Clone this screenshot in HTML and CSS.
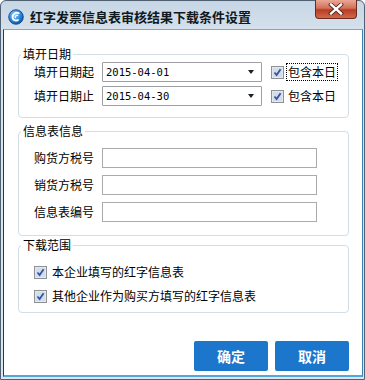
FILE: index.html
```html
<!DOCTYPE html>
<html lang="zh-CN">
<head>
    <meta charset="UTF-8">
    <title>红字发票信息表审核结果下载条件设置</title>
    <link rel="stylesheet" href="styles.css">
</head>
<body>
    <div class="window">
        <!-- 标题栏 -->
        <div class="titlebar">
            <svg class="app-icon" width="16" height="16" viewBox="0 0 16 16">
                <defs>
                    <radialGradient id="ball" cx="0.4" cy="0.35" r="0.7">
                        <stop offset="0" stop-color="#8fd0ff"/>
                        <stop offset="0.6" stop-color="#2b86d8"/>
                        <stop offset="1" stop-color="#0c4f9a"/>
                    </radialGradient>
                </defs>
                <circle cx="8" cy="8" r="7.3" fill="url(#ball)" stroke="#0b3f7a" stroke-width="0.8"/>
                <path d="M10.8 4.2 C8 2.8 4.4 5 4.6 8.4 C4.8 11 7.6 12.2 10 11" fill="none" stroke="#fff" stroke-width="1.8" stroke-linecap="round"/>
                <path d="M9.6 6.4 C8.2 6 7 7.2 7.4 8.6" fill="none" stroke="#fff" stroke-width="1.2" stroke-linecap="round"/>
            </svg>
            <span class="title">红字发票信息表审核结果下载条件设置</span>
            <div class="close-btn">
                <svg width="16" height="12" viewBox="0 0 16 12">
                    <path d="M3 1.5 L13 10.5 M13 1.5 L3 10.5" stroke="#4a2018" stroke-width="4" stroke-linecap="square"/>
                    <path d="M3 1.5 L13 10.5 M13 1.5 L3 10.5" stroke="#fff" stroke-width="2.4" stroke-linecap="square"/>
                </svg>
            </div>
        </div>

        <div class="client">
            <!-- 填开日期 -->
            <fieldset class="group group-date">
                <legend>填开日期</legend>
                <div class="row">
                    <span class="field-label">填开日期起</span>
                    <div class="combo"><span>2015-04-01</span><i class="arrow"></i></div>
                    <span class="check"><svg width="13" height="13" viewBox="0 0 13 13"><rect x="0.5" y="0.5" width="12" height="12" fill="#e3e8ee" stroke="#8f9295"/><rect x="2" y="2" width="9" height="9" fill="#d4dce6"/><path d="M3.5 6.5 L5.6 9 L9.6 3.2" fill="none" stroke="#2f55a8" stroke-width="1.8"/></svg></span>
                    <span class="check-text focus">包含本日</span>
                </div>
                <div class="row">
                    <span class="field-label">填开日期止</span>
                    <div class="combo"><span>2015-04-30</span><i class="arrow"></i></div>
                    <span class="check"><svg width="13" height="13" viewBox="0 0 13 13"><rect x="0.5" y="0.5" width="12" height="12" fill="#e3e8ee" stroke="#8f9295"/><rect x="2" y="2" width="9" height="9" fill="#d4dce6"/><path d="M3.5 6.5 L5.6 9 L9.6 3.2" fill="none" stroke="#2f55a8" stroke-width="1.8"/></svg></span>
                    <span class="check-text">包含本日</span>
                </div>
            </fieldset>

            <!-- 信息表信息 -->
            <fieldset class="group group-info">
                <legend>信息表信息</legend>
                <div class="row">
                    <span class="field-label">购货方税号</span>
                    <div class="text-box"></div>
                </div>
                <div class="row">
                    <span class="field-label">销货方税号</span>
                    <div class="text-box"></div>
                </div>
                <div class="row">
                    <span class="field-label">信息表编号</span>
                    <div class="text-box"></div>
                </div>
            </fieldset>

            <!-- 下载范围 -->
            <fieldset class="group group-range">
                <legend>下载范围</legend>
                <div class="row">
                    <span class="check"><svg width="13" height="13" viewBox="0 0 13 13"><rect x="0.5" y="0.5" width="12" height="12" fill="#e3e8ee" stroke="#8f9295"/><rect x="2" y="2" width="9" height="9" fill="#d4dce6"/><path d="M3.5 6.5 L5.6 9 L9.6 3.2" fill="none" stroke="#2f55a8" stroke-width="1.8"/></svg></span>
                    <span class="check-text">本企业填写的红字信息表</span>
                </div>
                <div class="row">
                    <span class="check"><svg width="13" height="13" viewBox="0 0 13 13"><rect x="0.5" y="0.5" width="12" height="12" fill="#e3e8ee" stroke="#8f9295"/><rect x="2" y="2" width="9" height="9" fill="#d4dce6"/><path d="M3.5 6.5 L5.6 9 L9.6 3.2" fill="none" stroke="#2f55a8" stroke-width="1.8"/></svg></span>
                    <span class="check-text">其他企业作为购买方填写的红字信息表</span>
                </div>
            </fieldset>

            <!-- 按钮 -->
            <div class="actions">
                <button class="btn">确定</button>
                <button class="btn">取消</button>
            </div>
        </div>
    </div>
</body>
</html>
```

FILE: styles.css
```css
/* 页面基础 */
body, html {
    margin: 0;
    padding: 0;
    height: 100%;
    overflow: hidden;
    background: #fff;
}
/* 窗口外框 */
.window {
    width: 365px;
    height: 380px;
    box-sizing: border-box;
    border: 1px solid #4f6173;
    border-radius: 6px 6px 0 0;
    background: linear-gradient(to bottom, #c6d6e5 0px, #d6e2ed 30px, #dbe6f0 100%);
    padding: 0 1px 2px 2px;
    display: flex;
    flex-direction: column;
    font-family: "Noto Sans CJK SC", sans-serif;
    font-size: 12px;
    color: #000;
}
/* 标题栏 */
.titlebar {
    height: 28px;
    display: flex;
    align-items: flex-start;
    flex-shrink: 0;
}
.app-icon {
    margin: 8px 0 0 5px;
}
.title {
    margin: 7px 0 0 6px;
    font-size: 13px;
    font-weight: bold;
    line-height: 18px;
    color: #101820;
}
.close-btn {
    margin-left: auto;
    margin-right: 6px;
    margin-top: -1px;
    width: 42px;
    height: 19px;
    box-sizing: border-box;
    border: 1px solid #6b2a1c;
    border-top: none;
    border-radius: 0 0 4px 4px;
    background: linear-gradient(to bottom, #e9a894 0%, #d4705a 45%, #b83c22 55%, #cf6a4c 100%);
    display: flex;
    align-items: center;
    justify-content: center;
}
/* 客户区 */
.client {
    flex: 1;
    background: #fff;
    border-top: 1px solid #8fa3b6;
    border-left: 1px solid #2b3a4a;
    border-right: 1px solid #3d7fae;
    border-bottom: 2px solid #52a8d8;
    display: flex;
    flex-direction: column;
}
/* 分组框 */
.group {
    margin: 0 13px 0 14px;
    padding: 0 0 0 2px;
    border: 1px solid #d3dde6;
    border-radius: 4px;
    min-width: 0;
}
.group legend {
    padding: 0 2px;
    line-height: 16px;
}
.group-date {
    margin-top: 16px;
    padding-bottom: 11px;
}
.group-info {
    margin-top: 5px;
    padding-top: 9px;
    padding-bottom: 13px;
}
.group-range {
    margin-top: 1px;
    padding-top: 11px;
    padding-bottom: 8px;
}
.row {
    display: flex;
    align-items: center;
    margin-left: 13px;
}
.group-date .row {
    height: 20px;
}
.group-date .row + .row {
    margin-top: 4px;
}
.group-info .row {
    height: 20px;
}
.group-info .row + .row {
    margin-top: 7px;
}
.group-range .row {
    height: 16px;
}
.group-range .row + .row {
    margin-top: 8px;
}
.field-label {
    width: 68px;
    line-height: 20px;
}
/* 下拉框 */
.combo {
    width: 160px;
    height: 20px;
    box-sizing: border-box;
    border: 1px solid #9c9fa3;
    border-radius: 1px;
    display: flex;
    align-items: center;
    padding-left: 3px;
    font-family: "DejaVu Sans Mono", monospace;
    font-size: 10.5px;
}
.combo .arrow {
    margin-left: auto;
    margin-right: 7px;
    width: 0;
    height: 0;
    border-left: 3.5px solid transparent;
    border-right: 3.5px solid transparent;
    border-top: 4px solid #1a1f2a;
}
/* 文本框 */
.text-box {
    width: 215px;
    height: 20px;
    box-sizing: border-box;
    border: 1px solid #a9abad;
}
/* 复选框 */
.check {
    display: flex;
    width: 13px;
    height: 13px;
}
.group-date .check {
    margin-left: 9px;
}
.check-text {
    margin-left: 5px;
    line-height: 16px;
}
.group-date .check-text {
    margin-left: 2px;
    padding: 0 1px;
    border: 1px solid transparent;
}
.group-date .check-text.focus {
    border: 1px dotted #000;
}
/* 底部按钮 */
.actions {
    margin: 28px 13px 0 0;
    display: flex;
    justify-content: flex-end;
    gap: 7px;
}
.btn {
    width: 74px;
    height: 30px;
    border: none;
    border-radius: 2px;
    background-color: #1b76cc;
    color: #fff;
    font-family: "Noto Sans CJK SC", sans-serif;
    font-size: 14px;
    font-weight: bold;
    padding: 0;
}
```
